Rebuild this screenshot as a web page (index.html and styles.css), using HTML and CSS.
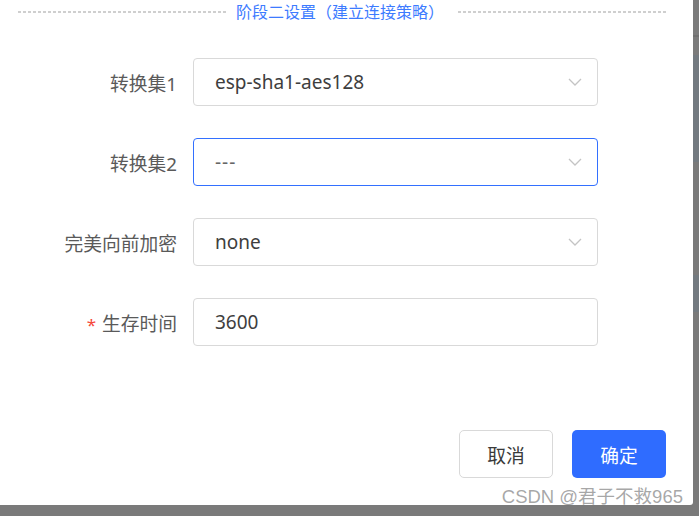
FILE: index.html
```html
<!DOCTYPE html>
<html lang="zh-CN">
<head>
    <meta charset="UTF-8">
    <meta name="viewport" content="width=device-width, initial-scale=1.0">
    <title>阶段二设置</title>
    <link rel="stylesheet" href="styles.css">
</head>
<body>
    <div class="modal">
        <div class="divider">
            <span class="divider-line"></span>
            <span class="divider-text">阶段二设置（建立连接策略）</span>
            <span class="divider-line"></span>
        </div>

        <div class="form">
            <div class="form-row">
                <label class="form-label">转换集1</label>
                <div class="select">
                    <span class="select-value">esp-sha1-aes128</span>
                    <svg class="arrow" width="14" height="8" viewBox="0 0 14 8"><polyline points="1,1 7,7 13,1" fill="none" stroke="#c4c4c4" stroke-width="1.3"/></svg>
                </div>
            </div>
            <div class="form-row">
                <label class="form-label">转换集2</label>
                <div class="select active">
                    <span class="select-value">---</span>
                    <svg class="arrow" width="14" height="8" viewBox="0 0 14 8"><polyline points="1,1 7,7 13,1" fill="none" stroke="#c4c4c4" stroke-width="1.3"/></svg>
                </div>
            </div>
            <div class="form-row">
                <label class="form-label">完美向前加密</label>
                <div class="select">
                    <span class="select-value">none</span>
                    <svg class="arrow" width="14" height="8" viewBox="0 0 14 8"><polyline points="1,1 7,7 13,1" fill="none" stroke="#c4c4c4" stroke-width="1.3"/></svg>
                </div>
            </div>
            <div class="form-row">
                <label class="form-label"><span class="required">*</span>生存时间</label>
                <div class="select">
                    <span class="select-value">3600</span>
                </div>
            </div>
        </div>

        <div class="footer">
            <button class="btn btn-cancel">取消</button>
            <button class="btn btn-ok">确定</button>
        </div>
    </div>

    <div class="watermark">CSDN @君子不救965</div>
</body>
</html>
```

FILE: styles.css
```css
* {
    box-sizing: border-box;
    padding: 0;
    margin: 0;
}

body {
    font-family: "Noto Sans", "Noto Sans CJK SC", sans-serif;
    width: 699px;
    height: 516px;
    overflow: hidden;
    position: relative;
    background-color: #7a7a7a;
    background-image: linear-gradient(to bottom,
        #7b7b7b 0, #7b7b7b 35px,
        #707070 35px, #707070 37px,
        #7b7b7b 37px, #7b7b7b 55px,
        #737a80 55px, #737a80 162px,
        #7a7a7a 162px, #7a7a7a 275px,
        #737a80 275px, #737a80 312px,
        #7a7a7a 312px);
}

.modal {
    width: 693px;
    height: 505px;
    background: #fff;
    border-bottom-right-radius: 3px;
    display: flex;
    flex-direction: column;
}

.divider {
    display: flex;
    align-items: center;
    height: 24px;
    padding: 0 27px 0 18px;
}

.divider-line {
    flex: 1;
    height: 2px;
    background-image: repeating-linear-gradient(to right, #cfcfcf 0, #cfcfcf 3px, transparent 3px, transparent 5px);
}

.divider-text {
    margin: 0 14px 0 10px;
    font-size: 16px;
    line-height: 22px;
    color: #3d7bff;
    white-space: nowrap;
}

.form {
    margin-top: 34px;
    display: flex;
    flex-direction: column;
    gap: 32px;
}

.form-row {
    display: grid;
    grid-template-columns: 177px 405px;
    column-gap: 16px;
    align-items: center;
}

.form-label {
    text-align: right;
    font-size: 18.75px;
    color: #5a5a5a;
}

.required {
    color: #f5483b;
    margin-right: 6px;
    font-size: 17px;
}

.select {
    height: 48px;
    border: 1px solid #d9d9d9;
    border-radius: 4px;
    display: flex;
    align-items: center;
    justify-content: space-between;
    padding: 0 15px 0 21px;
}

.select.active {
    border-color: #3370ff;
}

.select-value {
    font-size: 19px;
    color: #3e3e3e;
}

.active .select-value {
    color: #666;
    letter-spacing: 1px;
}

.footer {
    margin-top: auto;
    margin-bottom: 27px;
    display: flex;
    justify-content: flex-end;
    gap: 19px;
    padding-right: 27px;
}

.btn {
    width: 94px;
    height: 48px;
    border-radius: 5px;
    font-family: inherit;
    font-size: 18.75px;
    cursor: pointer;
}

.btn-cancel {
    background: #fff;
    border: 1px solid #d9d9d9;
    color: #3a3a3a;
}

.btn-ok {
    background: #2f6cff;
    border: none;
    color: #fff;
}

.watermark {
    position: absolute;
    right: 16px;
    bottom: 9px;
    font-family: "Liberation Sans", "Noto Sans CJK SC", sans-serif;
    font-size: 18.5px;
    line-height: 20px;
    color: rgba(80, 80, 80, 0.5);
    white-space: nowrap;
}
```
